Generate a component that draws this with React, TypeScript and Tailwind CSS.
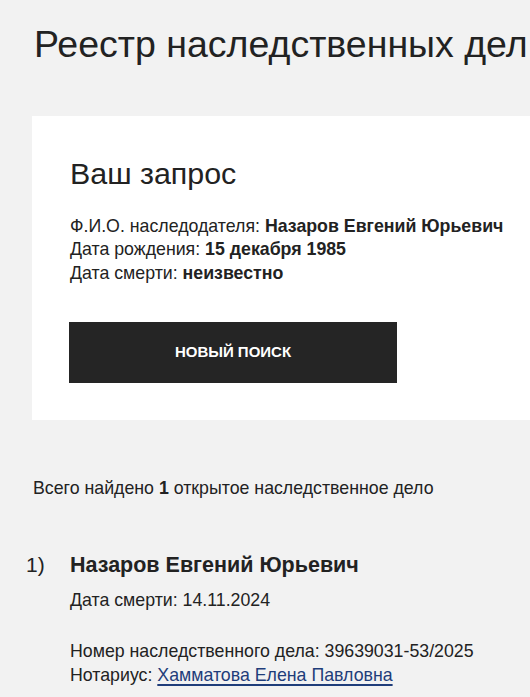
export default function App() {
  return (
    <div
      className="min-h-screen bg-[#f2f2f2] text-[#222222] overflow-hidden"
      style={{ fontFamily: '"Liberation Sans", Arial, sans-serif' }}
    >
      {/* Title */}
      <h1 className="pl-[34px] pt-[22px] text-[37.5px] leading-[44px] whitespace-nowrap">
        Реестр наследственных дел
      </h1>

      {/* Request card */}
      <div className="ml-[32px] mt-[50px] bg-white pl-[38px] pt-[38.5px] pb-[37px]">
        <h2 className="text-[30.4px] leading-[36px]">Ваш запрос</h2>
        <div className="mt-[24px] text-[17.75px] leading-[23.5px] whitespace-nowrap">
          <p>
            Ф.И.О. наследодателя: <b>Назаров Евгений Юрьевич</b>
          </p>
          <p>
            Дата рождения: <b>15 декабря 1985</b>
          </p>
          <p>
            Дата смерти: <b>неизвестно</b>
          </p>
        </div>
        <button className="mt-[37px] h-[61px] w-[328px] -ml-[1px] bg-[#252525] text-white text-[15px] font-bold uppercase">
          Новый поиск
        </button>
      </div>

      {/* Result summary */}
      <p className="pl-[33px] mt-[57px] text-[17.75px] leading-[23px] whitespace-nowrap">
        Всего найдено <b>1</b> открытое наследственное дело
      </p>

      {/* Result list */}
      <div className="mt-[51px] flex">
        <div className="w-[70px] pl-[26px] text-[21px] leading-[28px]">1)</div>
        <div>
          <div className="text-[21.5px] leading-[28px] font-bold whitespace-nowrap">
            Назаров Евгений Юрьевич
          </div>
          <div className="mt-[9.5px] text-[17.75px] leading-[23.5px]">Дата смерти: 14.11.2024</div>
          <div className="mt-[27px] text-[17.75px] leading-[24px] whitespace-nowrap">
            <p>Номер наследственного дела: 39639031-53/2025</p>
            <p>
              Нотариус:{" "}
              <a href="#" className="text-[#1f3d7a] underline decoration-2 underline-offset-[3px]">
                Хамматова Елена Павловна
              </a>
            </p>
          </div>
        </div>
      </div>
    </div>
  );
}
